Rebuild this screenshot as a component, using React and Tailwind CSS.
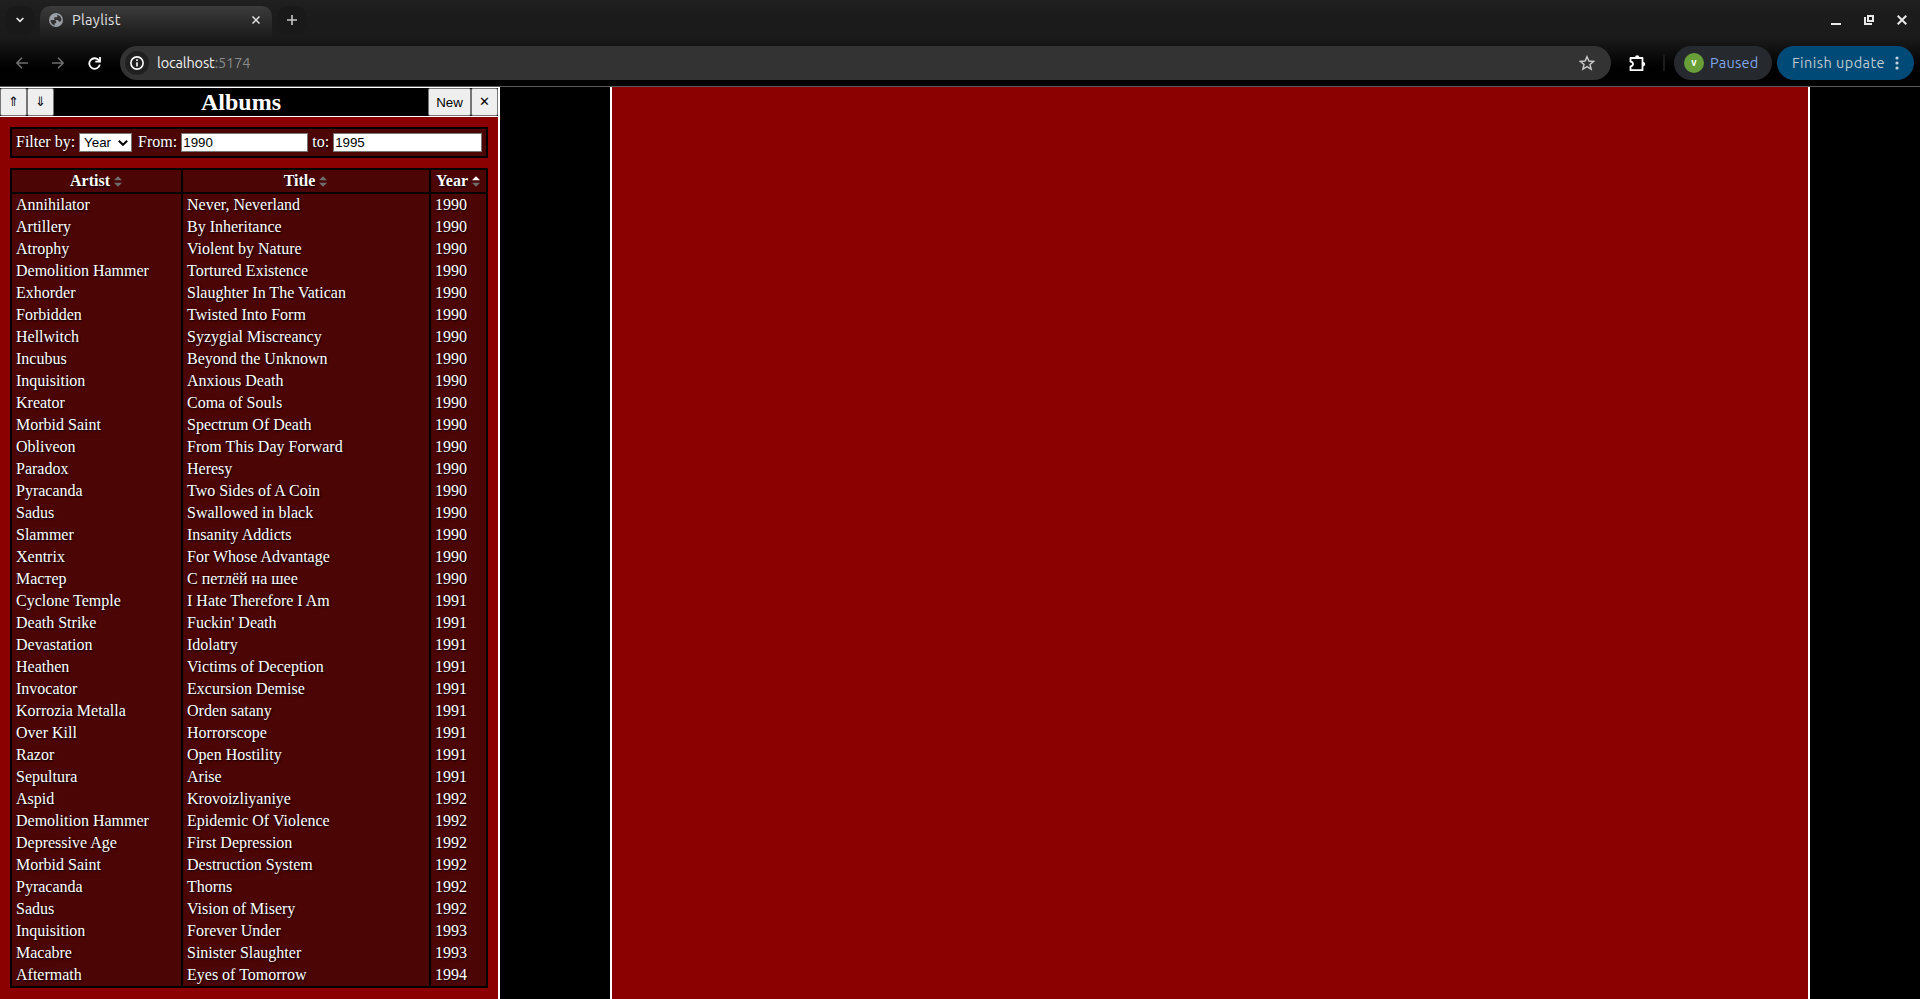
import React from "react";

const albums = `Annihilator|Never, Neverland|1990
Artillery|By Inheritance|1990
Atrophy|Violent by Nature|1990
Demolition Hammer|Tortured Existence|1990
Exhorder|Slaughter In The Vatican|1990
Forbidden|Twisted Into Form|1990
Hellwitch|Syzygial Miscreancy|1990
Incubus|Beyond the Unknown|1990
Inquisition|Anxious Death|1990
Kreator|Coma of Souls|1990
Morbid Saint|Spectrum Of Death|1990
Obliveon|From This Day Forward|1990
Paradox|Heresy|1990
Pyracanda|Two Sides of A Coin|1990
Sadus|Swallowed in black|1990
Slammer|Insanity Addicts|1990
Xentrix|For Whose Advantage|1990
Мастер|С петлёй на шее|1990
Cyclone Temple|I Hate Therefore I Am|1991
Death Strike|Fuckin' Death|1991
Devastation|Idolatry|1991
Heathen|Victims of Deception|1991
Invocator|Excursion Demise|1991
Korrozia Metalla|Orden satany|1991
Over Kill|Horrorscope|1991
Razor|Open Hostility|1991
Sepultura|Arise|1991
Aspid|Krovoizliyaniye|1992
Demolition Hammer|Epidemic Of Violence|1992
Depressive Age|First Depression|1992
Morbid Saint|Destruction System|1992
Pyracanda|Thorns|1992
Sadus|Vision of Misery|1992
Inquisition|Forever Under|1993
Macabre|Sinister Slaughter|1993
Aftermath|Eyes of Tomorrow|1994`
  .split("\n")
  .map((line) => line.split("|"));

function SortIcon({ active }) {
  return (
    <svg className="ml-1 h-[11px] w-2" viewBox="0 0 8 11">
      <path d="M0 4.2 4 0.2 8 4.2z" fill={active ? "#fff" : "#6e6e6e"} />
      <path d="M0 6.8 4 10.8 8 6.8z" fill="#6e6e6e" />
    </svg>
  );
}

function Tab() {
  return (
    <div className="ml-[6px] flex h-[34px] w-[232px] items-center rounded-t-[10px] bg-gradient-to-b from-[#3c3c3c] to-[#191919] pr-[12px] pb-[6px] pl-[9px] text-[#e3e3e3]">
      <svg className="h-[14px] w-[14px]" viewBox="0 0 14 14">
        <circle cx="7" cy="7" r="7" fill="#9aa0a6" />
        <path d="M1.500 7h3.800c1.400 0 1.900.8 1.900 2v1.200H5.700v2.200C3.200 11.900 1.500 9.700 1.500 7zM8.300 1.700c2.400.6 4.100 2.600 4.200 5.200-.4 1.500-1.300 2-2.500 1.600L8.600 7.100H6.800c-1 0-1.700-.6-1.700-1.400 0-.900.6-1.400 1.600-1.400h1.600z" fill="#333" />
      </svg>
      <span className="ml-[9px] text-[14.5px] leading-5 tracking-[0.3px]">Playlist</span>
      <svg className="ml-auto h-2 w-2" viewBox="0 0 8 8" fill="none" stroke="#e3e3e3" strokeWidth="1.5">
        <path d="M.5.5l7 7M7.500.5l-7 7" />
      </svg>
    </div>
  );
}

function BrowserChrome() {
  return (
    <header className="flex h-[87px] shrink-0 flex-col border-b border-[#5a5a5a] bg-[linear-gradient(#202020_0px,#1c1c1c_12px,#1a1a1a_38px,#000_68px,#020202_86px)] font-['Ubuntu','Noto_Sans',sans-serif]">
      <div className="flex h-10 items-end">
        <div className="ml-[6px] flex h-[34px] w-7 items-start">
          <div className="flex h-7 w-7 items-center justify-center rounded-[10px] bg-[#191919]">
            <svg className="h-[6px] w-2" viewBox="0 0 9 6" fill="none" stroke="#eee" strokeWidth="1.8">
              <path d="M.7.8 4.500 4.600 8.300.8" />
            </svg>
          </div>
        </div>
        <Tab />
        <div className="ml-[6px] flex h-[34px] w-7 items-start">
          <div className="flex h-7 w-7 items-center justify-center rounded-[10px] bg-[#191919]">
            <svg className="h-[10px] w-[10px]" viewBox="0 0 10 10" stroke="#c7c7c7" strokeWidth="1.6">
              <path d="M5 0v10M0 5h10" />
            </svg>
          </div>
        </div>
        <div className="mr-[13px] mb-[15px] ml-auto flex items-end gap-[23px]">
          <svg className="h-[10px] w-[10px]" viewBox="0 0 10 10"><path d="M0 8h10v2H0z" fill="#e8e8e8" /></svg>
          <svg className="h-[10px] w-[10px]" viewBox="0 0 10 10" fill="none" stroke="#e8e8e8" strokeWidth="2">
            <path d="M4 1h5v5H4zM1 2v7h7" />
          </svg>
          <svg className="h-[10px] w-[10px]" viewBox="0 0 10 10" stroke="#e8e8e8" strokeWidth="2">
            <path d="M.7.700l8.600 8.600M9.300.700.700 9.300" />
          </svg>
        </div>
      </div>
      <div className="flex h-[46px] items-center">
        <svg className="ml-4 h-3 w-3" viewBox="0 0 12 12" fill="none" stroke="#6e6e6e" strokeWidth="1.5"><path d="M12 6H1M6 .7.900 6 6 11.300" /></svg>
        <svg className="ml-6 h-3 w-3" viewBox="0 0 12 12" fill="none" stroke="#6e6e6e" strokeWidth="1.5"><path d="M0 6h11M6 .7 11.100 6 6 11.300" /></svg>
        <svg className="ml-6 h-[13px] w-[13px]" viewBox="0 0 13 13" fill="none" stroke="#fff" strokeWidth="1.8"><path d="M11 3.600A5.300 5.300 0 1 0 11.800 7.600M12 0v4.700H7.300" /></svg>
        <div className="ml-[19px] flex h-[34px] w-[1491px] items-center rounded-full bg-[#333] pr-4 pl-[5px]">
          <div className="flex h-6 w-6 items-center justify-center rounded-full bg-[#202020]">
            <svg className="h-[14px] w-[14px]" viewBox="0 0 14 14" fill="none" stroke="#fff" strokeWidth="1.600">
              <circle cx="7" cy="7" r="6.100" /><path d="M7 6.200v4.300M7 3.300v1.600" />
            </svg>
          </div>
          <span className="ml-2 text-[14.500px] leading-5 tracking-[-0.15px] text-[#f1f1f1]">localhost<span className="text-[#8c8c8c]">:5174</span></span>
          <svg className="ml-auto h-4 w-4" viewBox="0 0 16 16" fill="none" stroke="#c7c7c7" strokeWidth="1.500"><path d="M8 1.700 9.900 6l4.700.4-3.600 3.100 1.100 4.600L8 11.700l-4.100 2.400L5 9.500 1.400 6.400 6.100 6z" /></svg>
        </div>
        <svg className="ml-[18px] h-[17px] w-[17px]" viewBox="0 0 17 17"><path d="M1.500 3h12v12.200h-12v-3.700c3.300-.4 3.300-4.400 0-4.800z" fill="none" stroke="#fff" strokeWidth="1.800" strokeLinejoin="round" /><path d="M6 2.500a2.200 2.200 0 0 1 4.400 0zM14 6.900a2.200 2.200 0 0 1 0 4.400z" fill="#fff" /></svg>
        <div className="ml-[17px] h-4 w-0.5 bg-[#1b1b1b]" />
        <div className="ml-[9px] flex h-[34px] w-[98px] items-center rounded-full bg-[#26292e] pl-[10px]">
          <div className="flex h-5 w-5 items-center justify-center rounded-full bg-[#689f38] pb-px text-[10px] leading-none font-bold text-white">v</div>
          <span className="ml-[6px] text-[14.500px] leading-5 tracking-[0.25px] text-[#82a8ec]">Paused</span>
        </div>
        <div className="ml-[5px] flex h-[34px] w-[137px] items-center rounded-full bg-[#004a77] pl-[15px]">
          <span className="text-[14.500px] leading-5 tracking-[0.45px] whitespace-nowrap text-[#bdcbd3]">Finish update</span>
          <svg className="ml-auto mr-[15px] h-[14px] w-[4px]" viewBox="0 0 4 14" fill="#c2d4df"><circle cx="2" cy="2" r="1.600" /><circle cx="2" cy="7" r="1.600" /><circle cx="2" cy="12" r="1.600" /></svg>
        </div>
      </div>
    </header>
  );
}

const button = "flex h-7 items-center justify-center rounded-[2px] border border-[#767676] bg-[#efefef] font-['Liberation_Sans',sans-serif] text-[13.333px] leading-none text-black";
const field = "h-[19px] border border-[#767676] bg-white px-px font-['Liberation_Sans',sans-serif] text-[13.333px] text-black [text-shadow:none]";
const cell = "px-1 py-0 leading-[18px] border-black";

function AlbumsPanel() {
  return (
    <aside className="flex w-[500px] flex-col border-r-2 border-white">
      <div className="flex h-[30px] shrink-0 border-y border-white bg-black">
        <button className={button + " w-[27px]"}>⇑</button>
        <button className={button + " w-[27px]"}>⇓</button>
        <h2 className="flex-1 text-center text-2xl leading-7 font-bold">Albums</h2>
        <button className={button + " w-[43px] pt-px"}>New</button>
        <button className={button + " w-[27px]"}>✕</button>
      </div>
      <div className="flex flex-col gap-[10px] p-[10px] [text-shadow:1px_1px_2px_#000]">
        <div className="flex h-[31px] items-center border-2 border-black bg-[#4b0505] pl-1 leading-[18px]">
          <span className="pb-px">Filter by:</span>
          <div className="ml-1 flex h-[19px] w-[53px] items-center justify-between border border-[#767676] bg-white pr-[3px] pl-1 font-['Liberation_Sans',sans-serif] text-[13.333px] text-black [text-shadow:none]">
            Year
            <svg className="h-[6px] w-[10px]" viewBox="0 0 10 6" fill="none" stroke="#000" strokeWidth="2"><path d="M.8.800 5 4.800 9.200.800" /></svg>
          </div>
          <span className="ml-[6px] pb-px">From:</span>
          <input className={field + " ml-1 w-[127px]"} defaultValue="1990" />
          <span className="ml-1 pb-px">to:</span>
          <input className={field + " ml-1 w-[149px]"} defaultValue="1995" />
        </div>
        <table className="w-[478px] table-fixed border-separate border-spacing-0 border-2 border-black bg-[#4b0505]">
          <colgroup><col className="w-[171px]" /><col className="w-[248px]" /><col className="w-[55px]" /></colgroup>
          <thead>
            <tr className="h-6">
              {["Artist", "Title", "Year"].map((name) => (
                <th key={name} className="border-r-2 border-b-2 border-black p-0 leading-[18px] last:border-r-0">
                  <div className="flex items-center justify-center pr-px">{name}<SortIcon active={name === "Year"} /></div>
                </th>
              ))}
            </tr>
          </thead>
          <tbody>
            {albums.map(([artist, title, year]) => (
              <tr key={artist + title} className="h-[22px]">
                <td className={cell + " border-r-2"}>{artist}</td>
                <td className={cell + " border-r-2"}>{title}</td>
                <td className={cell}>{year}</td>
              </tr>
            ))}
          </tbody>
        </table>
      </div>
    </aside>
  );
}

export default function App() {
  return (
    <div className="flex h-[999px] w-[1920px] flex-col overflow-hidden bg-black">
      <BrowserChrome />
      <div className="flex flex-1 bg-black font-['Liberation_Serif',serif] text-base text-white">
        <div className="flex bg-[#8b0000]"><AlbumsPanel /></div>
        <main className="ml-[110px] w-[1200px] border-x-2 border-white bg-[#8b0000]" />
      </div>
    </div>
  );
}
